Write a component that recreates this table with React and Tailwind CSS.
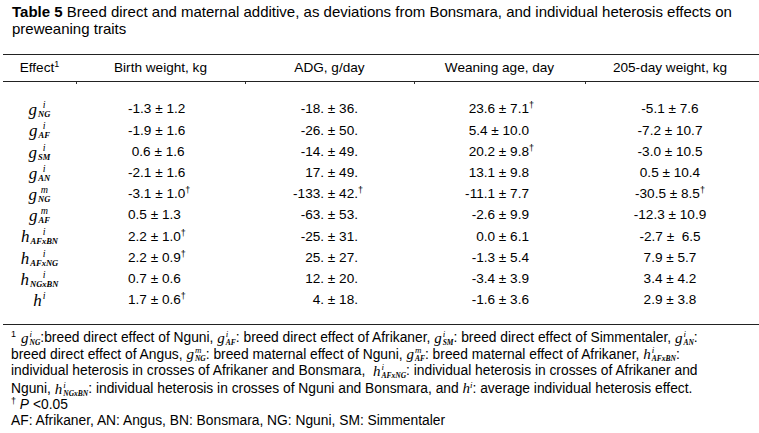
const rows = [
  ["g", "i", "NG", "-1.3 ± 1.2", "-18. ± 36.", "23.6 ± 7.1†", "-5.1 ± 7.6"],
  ["g", "i", "AF", "-1.9 ± 1.6", "-26. ± 50.", "5.4 ± 10.0", "-7.2 ± 10.7"],
  ["g", "i", "SM", " 0.6 ± 1.6", "-14. ± 49.", "20.2 ± 9.8†", "-3.0 ± 10.5"],
  ["g", "i", "AN", "-2.1 ± 1.6", "17. ± 49.", "13.1 ± 9.8", "0.5 ± 10.4"],
  ["g", "m", "NG", "-3.1 ± 1.0†", "-133. ± 42.†", "-11.1 ± 7.7", "-30.5 ± 8.5†"],
  ["g", "m", "AF", "0.5 ± 1.3", "-63. ± 53.", "-2.6 ± 9.9", "-12.3 ± 10.9"],
  ["h", "i", "AFxBN", "2.2 ± 1.0†", "-25. ± 31.", "0.0 ± 6.1", "-2.7 ±  6.5"],
  ["h", "i", "AFxNG", "2.2 ± 0.9†", "25. ± 27.", "-1.3 ± 5.4", "7.9 ± 5.7"],
  ["h", "i", "NGxBN", "0.7 ± 0.6", "12. ± 20.", "-3.4 ± 3.9", "3.4 ± 4.2"],
  ["h", "i", "", "1.7 ± 0.6†", "4. ± 18.", "-1.6 ± 3.6", "2.9 ± 3.8"],
];

// g / h with stacked superscript and subscript
const Sym = ({ b, sup, sub, small }) => (
  <span
    className={
      small
        ? "inline-flex items-center h-[15px] font-['Liberation_Serif',serif] italic align-middle"
        : "inline-flex items-center font-['Liberation_Serif',serif] italic align-middle"
    }
  >
    <span className={small ? "text-[15px] leading-none" : "text-[17px] leading-none"}>{b}</span>
    <span className="inline-flex flex-col ml-[1px]">
      <span className={small ? "text-[9px] leading-[9px]" : "text-[10px] leading-[10px]"}>{sup}</span>
      <span className={small ? "text-[7.5px] leading-[8px] font-bold" : "text-[8.5px] leading-[9px] font-bold"}>
        {sub || "\u00a0"}
      </span>
    </span>
  </span>
);

const Dag = () => <span className="text-[9px] relative -top-[5px] leading-none">†</span>;

// value with dagger; hang = dagger sits past the aligned edge
const Val = ({ v, hang }) => {
  const has = v.endsWith("†");
  const text = has ? v.slice(0, -1) : v;
  if (hang) {
    return (
      <span className="relative whitespace-pre">
        {text}
        {has && <span className="absolute left-full top-[0px] text-[9px] leading-none">†</span>}
      </span>
    );
  }
  return (
    <span className="whitespace-pre">
      {text}
      {has && <Dag />}
    </span>
  );
};

const cols = "grid grid-cols-[73px_169px_169px_171px_174px]";

const App = () => {
  return (
    <div className="w-[759px] h-[433px] bg-white text-black font-['Liberation_Sans',Arial,sans-serif] overflow-hidden">
      <div className="pl-[12px] pt-[3px] text-[15px] leading-[17px]">
        <span className="font-bold">Table 5</span> Breed direct and maternal additive, as
        deviations from Bonsmara, and individual heterosis effects on
        <br />
        preweaning traits
      </div>

      <div className="ml-[3px] mt-[17px] text-[13.6px]">
        <div className={`${cols} border-t border-b border-[#222] h-[28px] items-center`}>
          <div className="text-center">
            Effect<span className="text-[9px] relative -top-[5px] leading-none">1</span>
          </div>
          <div className="text-center">Birth weight, kg</div>
          <div className="text-center">ADG, g/day</div>
          <div className="text-center">Weaning age, day</div>
          <div className="text-center pr-[4px]">205-day weight, kg</div>
        </div>
        <div className={`${cols} h-[2px]`}>
          <div></div>
          <div className="border-l border-[#333]"></div>
          <div className="border-l border-[#333]"></div>
          <div className="border-l border-[#333]"></div>
          <div className="border-l border-[#333]"></div>
        </div>

        <div className="pt-[15px] pb-[13px] border-b border-[#222]">
          {rows.map((r, i) => (
            <div key={i} className={`${cols} h-[21.2px] items-center`}>
              <div className="text-center">
                <Sym b={r[0]} sup={r[1]} sub={r[2]} />
              </div>
              <div className="pl-[52px]">
                <Val v={r[3]} />
              </div>
              <div className="text-right pr-[56px]">
                <Val v={r[4]} hang />
              </div>
              <div className="text-right pr-[56px]">
                <Val v={r[5]} hang />
              </div>
              <div className="text-center pr-[4px]">
                <Val v={r[6]} />
              </div>
            </div>
          ))}
        </div>
      </div>

      <div className="pl-[11px] pt-[5px] text-[13.8px] leading-[16.7px] whitespace-nowrap">
        <div className="h-[16.7px]">
          <span className="text-[9px] relative -top-[5px] leading-none mr-[5px]">1</span>
          <Sym small b="g" sup="i" sub="NG" />:breed direct effect of Nguni, <Sym small b="g" sup="i" sub="AF" />:
          breed direct effect of Afrikaner, <Sym small b="g" sup="i" sub="SM" />: breed direct effect of
          Simmentaler, <Sym small b="g" sup="i" sub="AN" />:
        </div>
        <div className="h-[16.7px]">
          breed direct effect of Angus, <Sym small b="g" sup="m" sub="NG" />: breed maternal effect of Nguni,{" "}
          <Sym small b="g" sup="m" sub="AF" />: breed maternal effect of Afrikaner,{" "}
          <Sym small b="h" sup="i" sub="AFxBN" />:
        </div>
        <div className="h-[16.7px]">
          individual heterosis in crosses of Afrikaner and Bonsmara,&nbsp; <Sym small b="h" sup="i" sub="AFxNG" />:
          individual heterosis in crosses of Afrikaner and
        </div>
        <div className="h-[16.7px]">
          Nguni, <Sym small b="h" sup="i" sub="NGxBN" />: individual heterosis in crosses of Nguni and Bonsmara,
          and{" "}
          <span className="font-['Liberation_Serif',serif] italic text-[15px]">
            h<span className="text-[9px] relative -top-[5px] leading-none">i</span>
          </span>
          : average individual heterosis effect.
        </div>
        <div className="h-[16px]">
          <span className="text-[9px] relative -top-[5px] leading-none">†</span> <i>P</i> &lt;0.05
        </div>
        <div>AF: Afrikaner, AN: Angus, BN: Bonsmara, NG: Nguni, SM: Simmentaler</div>
      </div>
    </div>
  );
};

export default App;
